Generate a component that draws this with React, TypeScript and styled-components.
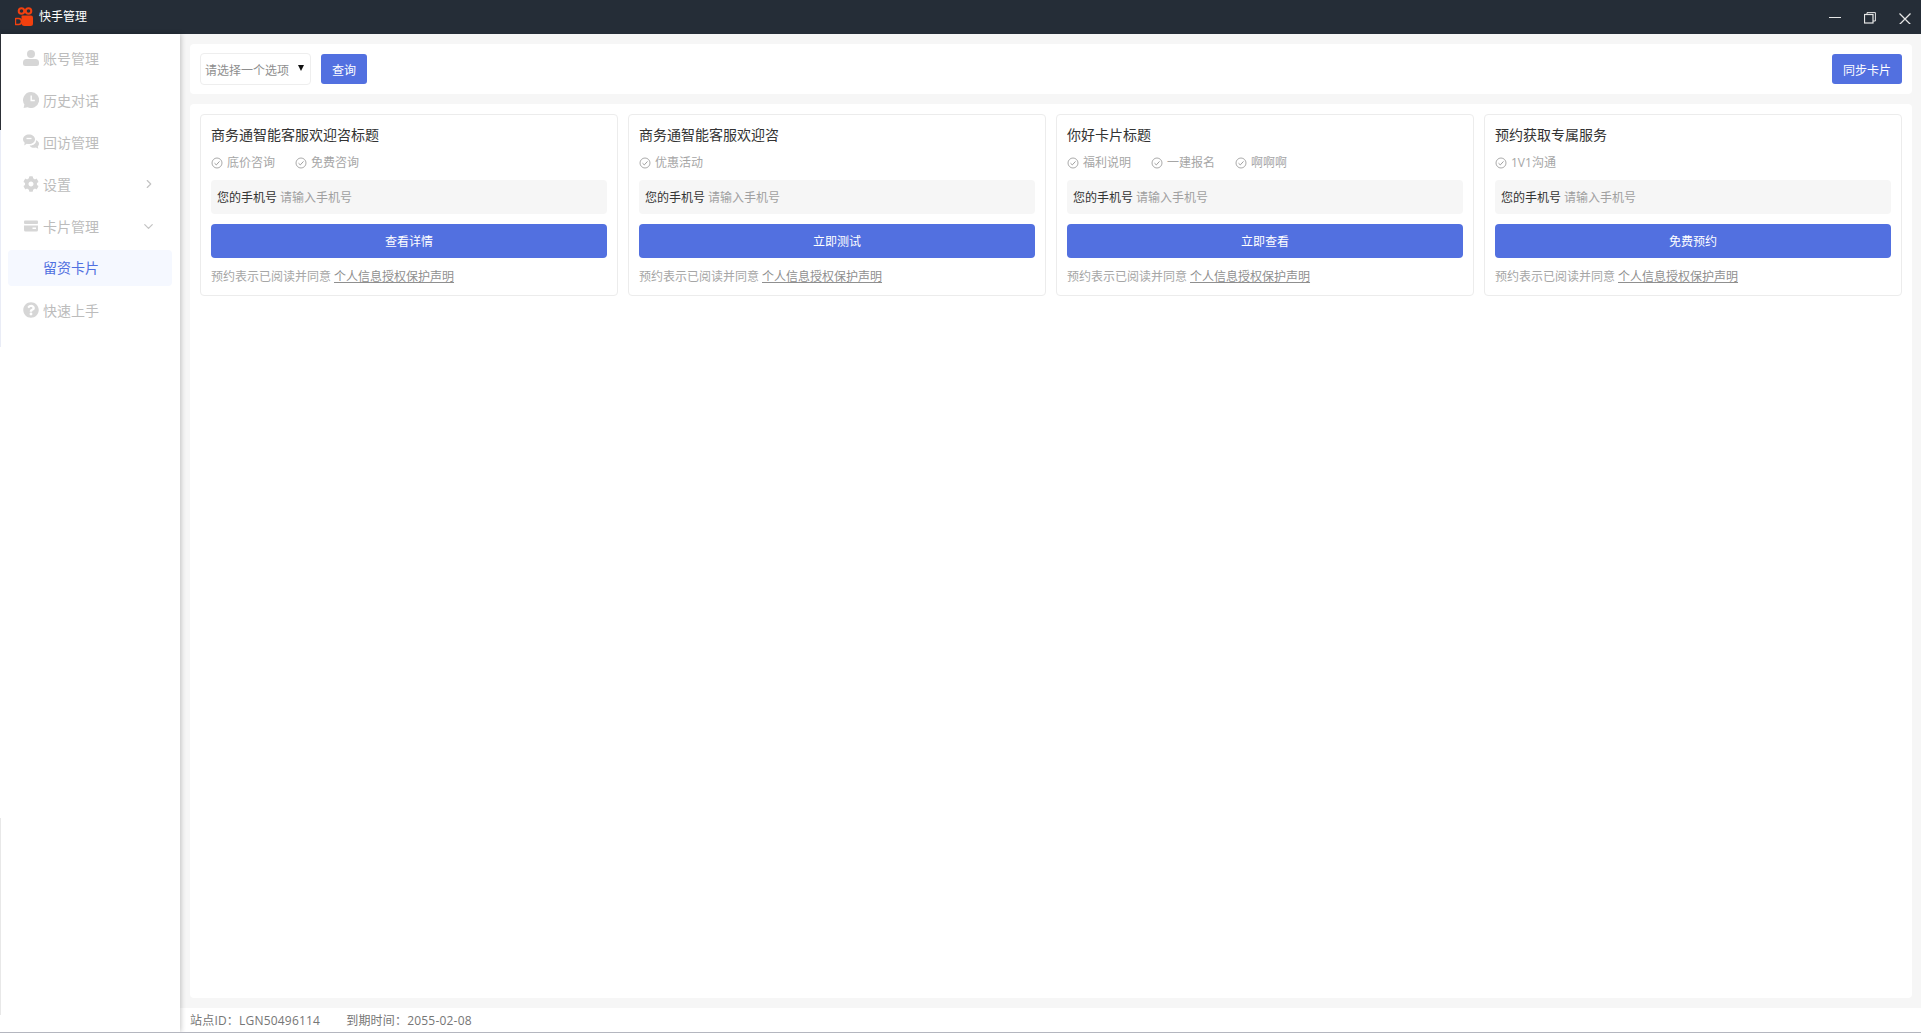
import React from 'react';
import styled, { createGlobalStyle } from 'styled-components';
import { ChevronRight, ChevronDown } from 'lucide-react';
import { FaCog, FaQuestionCircle } from 'react-icons/fa';

const GlobalStyle = createGlobalStyle`
  html, body {
    margin: 0;
    padding: 0;
    background: #ffffff;
    font-family: "Open Sans", "Noto Sans CJK SC", sans-serif;
  }
  * {
    box-sizing: border-box;
  }
`;

const Window = styled.div`
  width: 1921px;
  height: 1033px;
  display: flex;
  flex-direction: column;
  overflow: hidden;
  border-bottom: 1px solid #b4b6bf;
`;

const TitleBar = styled.header`
  height: 34px;
  flex: none;
  display: flex;
  align-items: center;
  justify-content: space-between;
  padding-left: 15px;
  background: #252d37;
`;

const AppName = styled.div`
  display: flex;
  align-items: center;
  gap: 6px;
  color: #ffffff;
  font-size: 12px;
  line-height: 16px;
`;

const AppNameText = styled.span`
  margin-top: -1px;
`;

const WindowControls = styled.div`
  display: flex;
  align-items: center;
  gap: 23px;
  padding: 1px 10px 0 0;
  svg {
    display: block;
  }
`;

const Body = styled.div`
  flex: 1;
  min-height: 0;
  display: flex;
`;

// the 1px strip down the left edge changes colour along the window height
const Sidebar = styled.nav`
  width: 180px;
  flex: none;
  padding: 3px 8px 0 8px;
  background-color: #ffffff;
  background-image: linear-gradient(
    to bottom,
    #2c2f36 0,
    #2c2f36 96px,
    #e9ecf6 96px,
    #e9ecf6 313px,
    #ffffff 313px,
    #ffffff 784px,
    #e8e8e8 784px,
    #e8e8e8 981px,
    #ffffff 981px
  );
  background-size: 1px 100%;
  background-repeat: no-repeat;
  box-shadow: 1px 0 5px rgba(0, 0, 0, 0.22);
  position: relative;
  z-index: 1;
`;

const MenuItem = styled.div<{ $active?: boolean; $sub?: boolean }>`
  height: ${(p) => (p.$sub ? '36px' : '42px')};
  display: flex;
  align-items: center;
  gap: 4px;
  padding: ${(p) => (p.$sub ? '0 0 2px 35px' : '0 16px 0 15px')};
  border-radius: 4px;
  font-size: 14px;
  color: ${(p) => (p.$active ? '#5170e0' : '#bcbcbc')};
  background: ${(p) => (p.$active ? '#f5f8ff' : 'transparent')};
  margin: ${(p) => (p.$sub ? '3px 0 3px 0' : '0')};
`;

const MenuIcon = styled.span`
  width: 16px;
  height: 16px;
  display: flex;
  align-items: center;
  justify-content: center;
  color: #d6d6d6;
`;

const MenuLabel = styled.span`
  flex: 1;
`;

const Main = styled.main`
  flex: 1;
  min-width: 0;
  display: flex;
  flex-direction: column;
  background: #f6f6f6;
`;

const Toolbar = styled.div`
  height: 50px;
  flex: none;
  margin: 10px 9px 10px 10px;
  padding: 0 10px;
  display: flex;
  align-items: center;
  justify-content: space-between;
  background: #ffffff;
  border-radius: 4px;
`;

const ToolGroup = styled.div`
  display: flex;
  align-items: center;
  gap: 10px;
`;

const SelectBox = styled.div`
  width: 111px;
  height: 32px;
  display: flex;
  align-items: center;
  justify-content: space-between;
  padding: 1px 6px 0 4px;
  border: 1px solid #eeeeee;
  border-radius: 4px;
  font-size: 12px;
  color: #8e8e8e;
`;

const Caret = styled.span`
  width: 0;
  height: 0;
  margin-bottom: 3px;
  border-left: 3.5px solid transparent;
  border-right: 3.5px solid transparent;
  border-top: 6px solid #111111;
`;

const ToolButton = styled.button`
  height: 30px;
  padding: 1px 11px 0;
  border: none;
  border-radius: 3px;
  background: #5270e0;
  color: #ffffff;
  font-family: inherit;
  font-size: 12px;
`;

const CardPanel = styled.section`
  flex: 1;
  min-height: 0;
  margin: 0 9px 0 10px;
  padding: 10px;
  display: grid;
  grid-template-columns: repeat(4, 1fr);
  gap: 10px;
  align-content: start;
  background: #ffffff;
  border-radius: 4px;
`;

const Card = styled.article`
  height: 182px;
  padding: 10px;
  border: 1px solid #ececec;
  border-radius: 4px;
`;

const CardTitle = styled.div`
  height: 20px;
  font-size: 14px;
  line-height: 19px;
  color: #333333;
`;

const TagRow = styled.div`
  height: 16px;
  margin-top: 10px;
  display: flex;
  align-items: center;
  gap: 20px;
`;

const Tag = styled.span`
  display: flex;
  align-items: center;
  gap: 4px;
  font-size: 12px;
  line-height: 16px;
  color: #a6a6a6;
`;

const TagCheck = styled.svg`
  display: block;
  flex: none;
`;

const PhoneField = styled.div`
  height: 34px;
  margin-top: 9px;
  padding: 0 6px;
  display: flex;
  align-items: center;
  gap: 3px;
  background: #f6f6f6;
  border-radius: 4px;
  font-size: 12px;
  color: #333333;
`;

const Placeholder = styled.span`
  color: #a0a0a0;
`;

const CardButton = styled.button`
  width: 100%;
  height: 34px;
  margin-top: 10px;
  display: block;
  border: none;
  border-radius: 4px;
  background: #5270e0;
  color: #ffffff;
  font-family: inherit;
  font-size: 12px;
`;

const Consent = styled.div`
  margin-top: 11px;
  height: 16px;
  font-size: 12px;
  line-height: 16px;
  color: #a6a6a6;
`;

const ConsentLink = styled.span`
  margin-left: 3px;
  color: #8f8f8f;
  text-decoration: underline;
`;

const StatusBar = styled.footer`
  height: 24px;
  flex: none;
  margin-top: 10px;
  padding-left: 10px;
  display: flex;
  align-items: center;
  gap: 26px;
  background: #ffffff;
  font-size: 12px;
  letter-spacing: 0.2px;
  color: #767676;
`;

const KuaishouLogo = () => (
  <svg width="18" height="20" viewBox="0 0 18 20">
    <circle cx="6.5" cy="4" r="2.8" fill="none" stroke="#f2400f" strokeWidth="2" />
    <circle cx="13.5" cy="4" r="2.8" fill="none" stroke="#f2400f" strokeWidth="2" />
    <path d="M7 8.5h9a2 2 0 0 1 2 2v6a2.5 2.5 0 0 1-2.5 2.5H9.5A3 3 0 0 1 6.5 16V9a.5.5 0 0 1 .5-.5z" fill="#f2400f" />
    <path d="M1 11.5h2.5a3 3 0 0 1 0 6H1a.6.6 0 0 1-.6-.6v-4.8a.6.6 0 0 1 .6-.6z" fill="none" stroke="#f2400f" strokeWidth="1.6" />
  </svg>
);

const UserIcon = () => (
  <svg width="16" height="16" viewBox="0 0 16 16">
    <circle cx="8" cy="4" r="4" fill="currentColor" />
    <path d="M3.5 9h9A3.5 3.5 0 0 1 16 12.5v1A2.5 2.5 0 0 1 13.5 16h-11A2.5 2.5 0 0 1 0 13.5v-1A3.5 3.5 0 0 1 3.5 9z" fill="currentColor" />
  </svg>
);

const HistoryIcon = () => (
  <svg width="16" height="16" viewBox="0 0 16 16">
    <path d="M8 0a8 8 0 1 1-3.4 15.2L0.6 16l.8-3.6A8 8 0 0 1 8 0z" fill="currentColor" />
    <path d="M8.2 3.5v5h3.6" fill="none" stroke="#ffffff" strokeWidth="1.4" />
  </svg>
);

const CommentsIcon = () => (
  <svg width="16" height="16" viewBox="0 0 16 16">
    <path d="M6 0.5c3.3 0 6 2.1 6 4.8s-2.700 4.800-6 4.800c-.8 0-1.500-.1-2.200-.3L1.200 11.500l.5-2.700C.7 7.900 0 6.700 0 5.300 0 2.600 2.700.5 6 .5z" fill="currentColor" />
    <path d="M3.500 4.500h5" stroke="#ffffff" strokeWidth="1.3" />
    <path d="M13 6.300c1.800.6 3 1.900 3 3.500 0 1-.5 1.900-1.200 2.600l.5 2.400-2.400-1.300c-.6.2-1.200.3-1.900.3-2 0-3.700-.9-4.400-2.300 3.600.3 6.800-1.900 6.400-5.200z" fill="currentColor" />
  </svg>
);

const CardIcon = () => (
  <svg width="16" height="16" viewBox="0 0 16 16">
    <rect x="1" y="2.5" width="14" height="3.500" rx="1" fill="currentColor" />
    <path d="M1 7.500h14V12a1.500 1.500 0 0 1-1.500 1.500h-11A1.500 1.500 0 0 1 1 12z" fill="currentColor" />
    <rect x="9.500" y="9.500" width="3.500" height="1.500" fill="#ffffff" />
  </svg>
);

const CheckIcon = () => (
  <TagCheck width="12" height="12" viewBox="0 0 12 12" fill="none" stroke="#a0a0a0">
    <circle cx="6" cy="6" r="5" strokeWidth="0.9" />
    <path d="M3.500 6.200l1.800 1.700 3.200-3.500" strokeWidth="1" />
  </TagCheck>
);

const cards = [
  { title: '商务通智能客服欢迎咨标题', tags: ['底价咨询', '免费咨询'], action: '查看详情' },
  { title: '商务通智能客服欢迎咨', tags: ['优惠活动'], action: '立即测试' },
  { title: '你好卡片标题', tags: ['福利说明', '一建报名', '啊啊啊'], action: '立即查看' },
  { title: '预约获取专属服务', tags: ['1V1沟通'], action: '免费预约' },
];

export default function App() {
  return (
    <Window>
      <GlobalStyle />
      <TitleBar>
        <AppName>
          <KuaishouLogo />
          <AppNameText>快手管理</AppNameText>
        </AppName>
        <WindowControls>
          <svg width="12" height="12" viewBox="0 0 12 12">
            <path d="M0 5.500h12" stroke="#e6e6e6" strokeWidth="1" />
          </svg>
          <svg width="12" height="12" viewBox="0 0 12 12" fill="none" stroke="#e6e6e6">
            <rect x="0.500" y="2.500" width="8.500" height="8.500" strokeWidth="1.200" />
            <path d="M3 2.500V0.600h8.400V9H9" />
          </svg>
          <svg width="12" height="12" viewBox="0 0 12 12">
            <path d="M0.500 1.500l11 11M11.500 1.500l-11 11" stroke="#e6e6e6" strokeWidth="1.300" />
          </svg>
        </WindowControls>
      </TitleBar>
      <Body>
        <Sidebar>
          <MenuItem>
            <MenuIcon><UserIcon /></MenuIcon>
            <MenuLabel>账号管理</MenuLabel>
          </MenuItem>
          <MenuItem>
            <MenuIcon><HistoryIcon /></MenuIcon>
            <MenuLabel>历史对话</MenuLabel>
          </MenuItem>
          <MenuItem>
            <MenuIcon><CommentsIcon /></MenuIcon>
            <MenuLabel>回访管理</MenuLabel>
          </MenuItem>
          <MenuItem>
            <MenuIcon><FaCog size={16} /></MenuIcon>
            <MenuLabel>设置</MenuLabel>
            <ChevronRight size={14} color="#c4c4c4" />
          </MenuItem>
          <MenuItem>
            <MenuIcon><CardIcon /></MenuIcon>
            <MenuLabel>卡片管理</MenuLabel>
            <ChevronDown size={15} color="#c4c4c4" />
          </MenuItem>
          <MenuItem $sub $active>留资卡片</MenuItem>
          <MenuItem>
            <MenuIcon><FaQuestionCircle size={16} /></MenuIcon>
            <MenuLabel>快速上手</MenuLabel>
          </MenuItem>
        </Sidebar>
        <Main>
          <Toolbar>
            <ToolGroup>
              <SelectBox>
                请选择一个选项
                <Caret />
              </SelectBox>
              <ToolButton>查询</ToolButton>
            </ToolGroup>
            <ToolButton>同步卡片</ToolButton>
          </Toolbar>
          <CardPanel>
            {cards.map((card) => (
              <Card key={card.title}>
                <CardTitle>{card.title}</CardTitle>
                <TagRow>
                  {card.tags.map((tag) => (
                    <Tag key={tag}>
                      <CheckIcon />
                      <span>{tag}</span>
                    </Tag>
                  ))}
                </TagRow>
                <PhoneField>
                  您的手机号
                  <Placeholder>请输入手机号</Placeholder>
                </PhoneField>
                <CardButton>{card.action}</CardButton>
                <Consent>
                  预约表示已阅读并同意
                  <ConsentLink>个人信息授权保护声明</ConsentLink>
                </Consent>
              </Card>
            ))}
          </CardPanel>
          <StatusBar>
            <span>站点ID：LGN50496114</span>
            <span>到期时间：2055-02-08</span>
          </StatusBar>
        </Main>
      </Body>
    </Window>
  );
}
